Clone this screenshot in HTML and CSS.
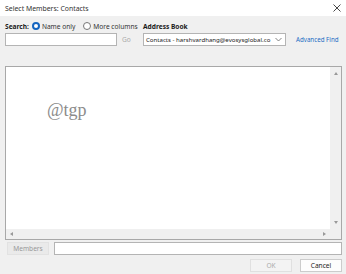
FILE: index.html
```html
<!DOCTYPE html>
<html lang="en">
<head>
  <meta charset="UTF-8">
  <title>Select Members: Contacts</title>
  <link rel="stylesheet" href="styles.css">
</head>
<body>
  <div class="window">
    <div class="titlebar">
      <span class="title">Select Members: Contacts</span>
      <svg class="close" width="8" height="8" viewBox="0 0 8 8"><path d="M0.5 0.5 L7.5 7.5 M7.5 0.5 L0.5 7.5" stroke="#333" stroke-width="0.9"/></svg>
    </div>
    <div class="content">
      <div class="row search-row">
        <div class="search-left">
          <b>Search:</b>
          <label class="radio"><span class="dot on"></span>Name only</label>
          <label class="radio"><span class="dot"></span>More columns</label>
        </div>
        <b class="ab-label">Address Book</b>
      </div>
      <div class="row input-row">
        <div class="search-left">
          <span class="field search-field"></span>
          <span class="go">Go</span>
        </div>
        <div class="select">
          <span>Contacts - harshvardhang@evosysglobal.co</span>
          <svg width="7" height="5" viewBox="0 0 7 5"><path d="M0.5 1 L3.5 4 L6.5 1" fill="none" stroke="#666" stroke-width="0.8"/></svg>
        </div>
        <a class="adv">Advanced Find</a>
      </div>
      <div class="list">
        <div class="list-body">
          <span class="mark">@tgp</span>
        </div>
        <div class="vbar">
          <span class="arr up"></span>
          <span class="arr down"></span>
        </div>
        <div class="hbar">
          <span class="arr left"></span>
          <span class="arr right"></span>
        </div>
        <div class="corner"></div>
      </div>
      <div class="row members-row">
        <span class="btn members">Members</span>
        <span class="field members-field"></span>
      </div>
      <div class="row buttons-row">
        <span class="btn ok">OK</span>
        <span class="btn cancel">Cancel</span>
      </div>
    </div>
  </div>
</body>
</html>
```
FILE: styles.css
```css
body { margin:0; font-family:"Noto Sans","Open Sans",sans-serif; font-size:6.6px; color:#1a1a1a; }
.window { width:346px; height:274px; background:#f0f0f0; overflow:hidden; white-space:nowrap; }
.titlebar { height:16px; background:#fff; display:flex; align-items:center; justify-content:space-between; padding:0 4px 0 5px; }
.title { font-size:6.9px; color:#333; }
.close { margin-right:1px; }
.content { padding:0 4px 0 5px; }
.row { display:flex; align-items:center; }
.search-row { height:12px; margin-top:4px; }
.search-left { width:138px; display:flex; align-items:center; }
.search-left b { margin-right:3px; }
.radio { display:flex; align-items:center; margin-right:8px; color:#333; }
.dot { width:6px; height:6px; border:1px solid #777; border-radius:50%; margin-right:2px; background:#fff; }
.dot.on { border:2px solid #1565c0; width:4px; height:4px; }
.input-row { margin-top:1px; height:13px; }
.field { display:block; background:#fff; border:1px solid #b4b4b4; height:11px; }
.search-field { width:110px; }
.go { color:#aaa; margin-left:5px; }
.select { height:11px; border:1px solid #b4b4b4; background:#fff; display:flex; align-items:center; justify-content:space-between; padding:0 3px 0 2px; width:136px; overflow:hidden; font-size:6.1px; }
.select svg { flex:none; margin-left:2px; }
.adv { margin-left:10px; color:#1c6bc4; font-size:6.2px; }
.list { margin-top:20px; height:172px; border:1px solid #a8a8a8; background:#fff; display:grid; grid-template-columns:1fr 11px; grid-template-rows:1fr 10px; }
.list-body { padding:33px 0 0 41px; }
.mark { font-family:"Liberation Serif",serif; font-size:18px; color:#8c8c8c; }
.vbar { background:#f0f0f0; display:flex; flex-direction:column; justify-content:space-between; align-items:center; padding:5px 0 5px; }
.hbar { background:#f0f0f0; display:flex; justify-content:space-between; align-items:center; padding:0 4px 0 4px; }
.corner { background:#f0f0f0; }
.arr { width:0; height:0; border:2.5px solid transparent; }
.up { border-bottom:3px solid #999; border-top:0; }
.down { border-top:3px solid #999; border-bottom:0; }
.left { border-right:3px solid #999; border-left:0; }
.right { border-left:3px solid #999; border-right:0; }
.members-row { margin-top:2px; height:12px; }
.btn { display:flex; align-items:center; justify-content:center; height:11px; }
.members { width:40px; margin-left:2px; border:1px solid #e2e2e2; background:#eaeaea; color:#999; }
.members-field { flex:1; margin-left:5px; }
.buttons-row { justify-content:flex-end; margin-top:5px; }
.ok { width:40px; border:1px solid #e0e0e0; color:#aaa; background:#f3f3f3; }
.cancel { width:40px; margin-left:8px; border:1px solid #ccc; background:#fdfdfd; color:#222; }
```
